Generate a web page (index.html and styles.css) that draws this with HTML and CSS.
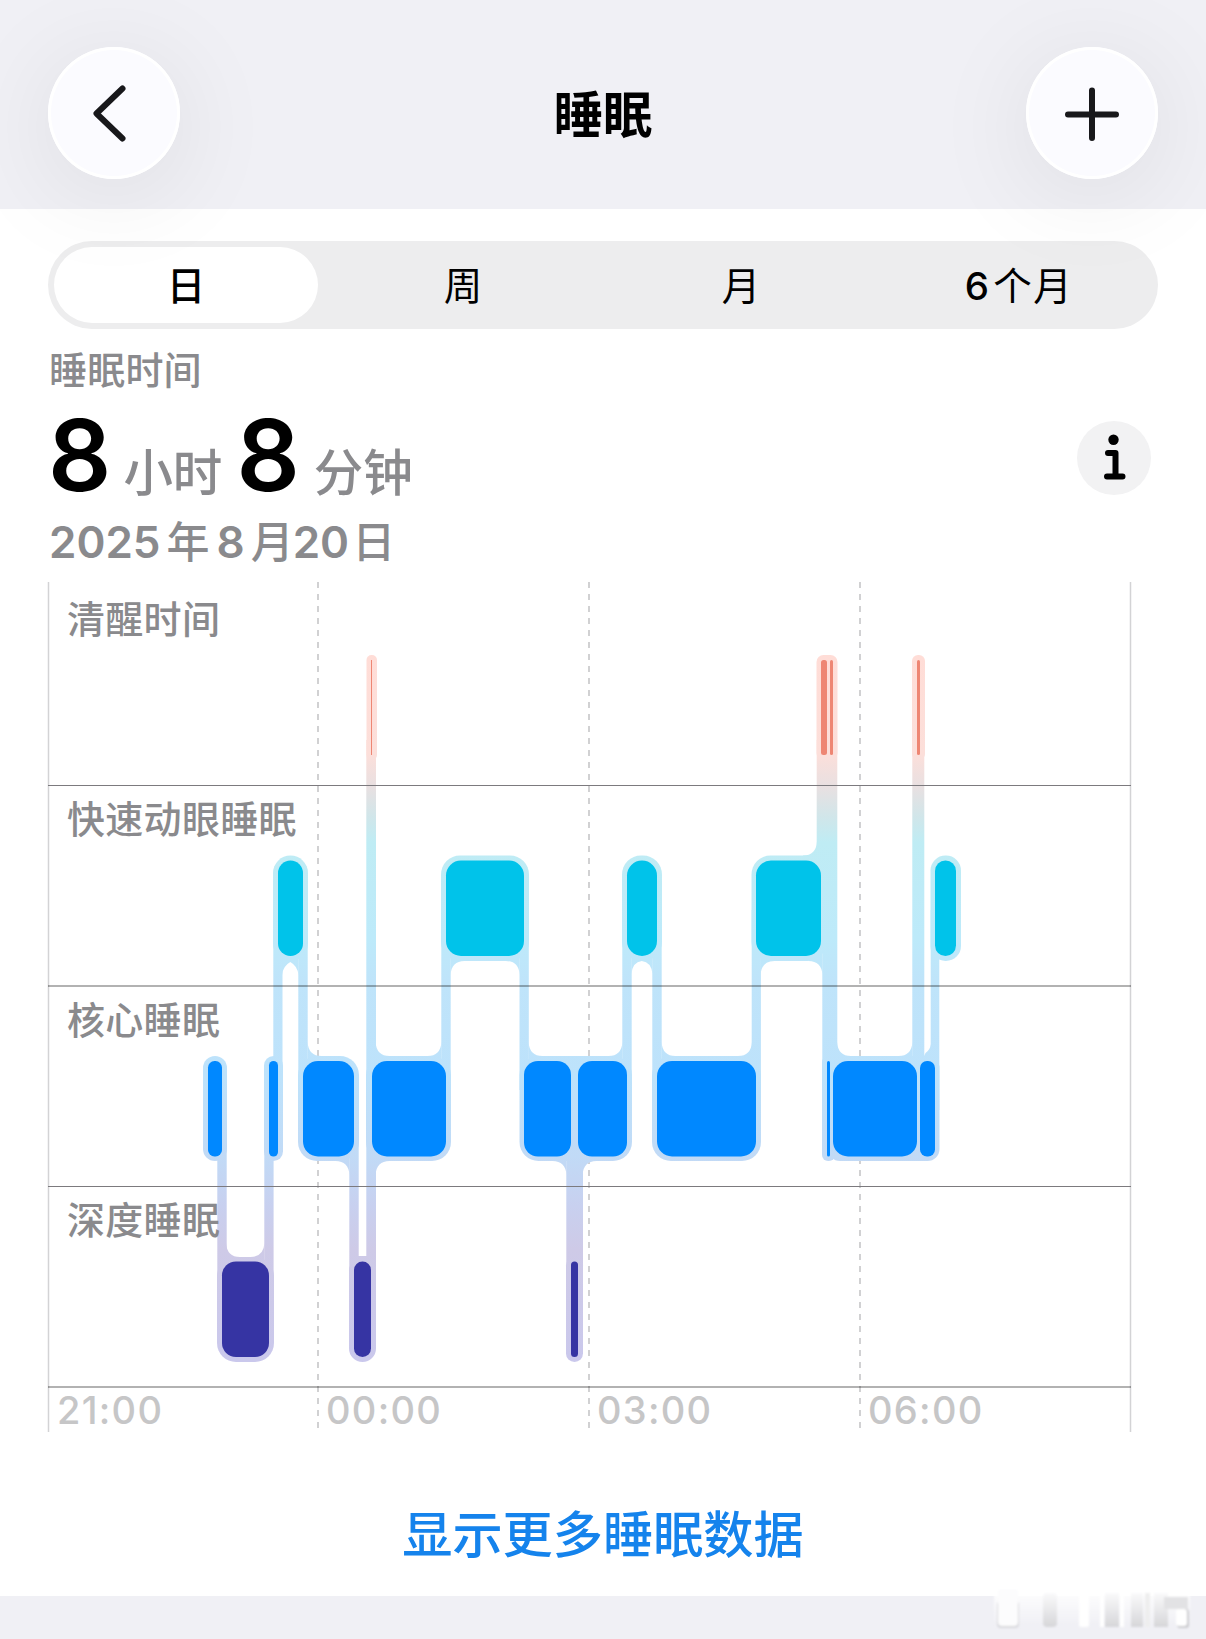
FILE: index.html
```html
<!DOCTYPE html>
<html lang="zh-CN">
<head>
<meta charset="utf-8">
<title>睡眠</title>
<link rel="stylesheet" href="styles.css">
</head>
<body>
<header class="nav">
  <button class="round-btn" aria-label="返回">
    <svg width="132" height="132" viewBox="0 0 132 132"><path d="M74.500 41.500 L48.500 66.500 L74.500 91.500" class="glyph"/></svg>
  </button>
  <h1 class="title">睡眠</h1>
  <button class="round-btn" aria-label="添加">
    <svg width="132" height="132" viewBox="0 0 132 132"><path d="M66 43.500 V91 M42 67.500 H90" class="glyph"/></svg>
  </button>
</header>
<main class="content">
  <nav class="segments">
    <span class="segment segment-active">日</span>
    <span class="segment">周</span>
    <span class="segment">月</span>
    <span class="segment"><span class="digit">6</span><span class="after-digit">个月</span></span>
  </nav>
  <section class="summary">
    <div class="summary-text">
      <p class="caption">睡眠时间</p>
      <p class="duration"><b>8</b><span class="unit unit-hours">小时</span><b>8</b><span class="unit unit-minutes">分钟</span></p>
      <p class="date">2025<span class="year">年</span>8<span class="month">月</span>20<span class="day">日</span></p>
    </div>
    <button class="info" aria-label="信息">
      <svg width="74" height="74" viewBox="0 0 74 74"><circle cx="36.500" cy="18.800" r="5.200"/><path d="M31 32 H38.500 V55 M30 55.500 H45.500" /></svg>
    </button>
  </section>
  <svg class="chart" width="1206" height="852" viewBox="0 582 1206 852">
    <defs>
      <linearGradient id="stage" gradientUnits="userSpaceOnUse" x1="0" y1="655" x2="0" y2="1362">
        <stop offset="0" stop-color="#ffddd7"/>
        <stop offset=".14" stop-color="#fcdfda"/>
        <stop offset=".185" stop-color="#e9e0e1"/>
        <stop offset=".23" stop-color="#d0e6ea"/>
        <stop offset=".265" stop-color="#bfecf4"/>
        <stop offset=".4" stop-color="#bdeafa"/>
        <stop offset=".46" stop-color="#bfe4fa"/>
        <stop offset=".6" stop-color="#bde2fb"/>
        <stop offset=".71" stop-color="#c1daf6"/>
        <stop offset=".78" stop-color="#c8d0ef"/>
        <stop offset=".84" stop-color="#cecae7"/>
        <stop offset="1" stop-color="#cac8ec"/>
      </linearGradient>
    </defs>
    <g class="grid-solid"><path d="M48.500 582V1432M1130.500 582V1432"/></g>
    <g class="grid-dash"><path d="M318 582V1432M589 582V1432M860 582V1432"/></g>
    <g fill="url(#stage)">
      <!-- outlines around each block -->
      <rect x="203" y="1056" width="24" height="105" rx="12"/>
      <rect x="264" y="1056" width="19" height="105" rx="9.500"/>
      <rect x="298" y="1056" width="61" height="105" rx="19"/>
      <rect x="366" y="1056" width="85" height="105" rx="19"/>
      <rect x="519.500" y="1056" width="112.500" height="105" rx="19"/>
      <rect x="652" y="1056" width="109" height="105" rx="19"/>
      <rect x="822" y="1056" width="13" height="105" rx="6"/>
      <rect x="828" y="1056" width="111.500" height="105" rx="12"/>
      <rect x="273" y="855.500" width="35" height="105.500" rx="17.500"/>
      <rect x="441" y="855.500" width="88" height="105.500" rx="19"/>
      <rect x="622" y="855.500" width="40" height="105.500" rx="19"/>
      <rect x="751.500" y="855.500" width="75" height="105.500" rx="19"/>
      <rect x="930.500" y="855.500" width="30.500" height="105.500" rx="15"/>
      <rect x="217" y="1257" width="57" height="105" rx="19"/>
      <rect x="349" y="1257" width="27" height="105" rx="13.500"/>
      <rect x="566" y="1257" width="17" height="105" rx="8.500"/>
      <rect x="366.500" y="655" width="10.500" height="105" rx="5"/>
      <rect x="816.500" y="655" width="21" height="105" rx="7"/>
      <rect x="912" y="655" width="13" height="105" rx="6"/>
      <!-- transitions -->
      <path d="M217.300 1140h9.400v140h-9.400zM264.300 1140h9.300v140h-9.300zM273.300 910h9.200v190h-9.200zM298.300 910h9.400v180h-9.400zM349.300 1130h9.400v145h-9.400zM366.300 740h9.700v540h-9.700zM441.300 910h9.400v180h-9.400zM519.500 910h9.300v180h-9.300zM566.300 1130h16.700v150h-16.700zM622.300 910h9.400v180h-9.400zM652.300 910h9.400v180h-9.400zM751.700 910h9.200v180h-9.200zM816.700 740h20.600v210h-20.600zM822.300 900h15v240h-15zM912.300 740h12v350h-12zM930.700 910h8.600v200h-8.600z"/>
      <!-- fillets above blocks -->
      <path d="M226 1243q1 14 14 14v12h-14zM264.500 1243q-1 14-14 14v12h14zM307.500 1042q1 14 14 14v12h-14zM375.500 1042q1 14 14 14v12h-14zM441.500 1042q-1 14-14 14v12h14zM528.500 1042q1 14 14 14v12h-14zM622.500 1042q-1 14-14 14v12h14zM661.500 1042q1 14 14 14v12h-14zM752 1042q-1 14-14 14v12h14zM837 1042q1 14 14 14v12h-14zM912.500 1042q-1 14-14 14v12h14zM817 841.500q-1 14-14 14v12h14zM931 1044q-1 6-5.500 9l-2 4h7.500z"/>
      <!-- fillets below blocks -->
      <path d="M349.500 1175q-1-14-14-14v-12h14zM375.500 1175q1-14 14-14v-12h-14zM566.500 1175q-1-14-14-14v-12h14zM582.500 1175q1-14 14-14v-12h-14zM450.500 975q1-14 14-14v-12h-14zM519.700 975q-1-14-14-14v-12h14zM760.500 975q1-14 14-14v-12h-14zM822.500 975q-1-14-14-14v-14h14zM282 975q1-9 8.300-13q7.300 4 8.200 13v-25h-16.500zM631.500 974q1-12 10.300-13q9.500 1 10.700 13v-25h-21z"/>
      <path d="M358 1256h9v4h-9z"/>
      <path d="M917 1056h14v24h-14z"/>
    </g>
    <g class="rows"><path d="M48 785.500H1131M48 1186.500H1131" class="row-thin"/><path d="M48 986H1131M48 1387H1131" class="row-wide"/></g>
    <g class="awake">
      <rect x="371" y="660" width="1" height="95"/>
      <rect x="821" y="660" width="6" height="95" rx="2.500"/>
      <rect x="830" y="660" width="3" height="95" rx="1.500"/>
      <rect x="917" y="660" width="3" height="95" rx="1.500"/>
    </g>
    <g class="rem">
      <rect x="278" y="860.500" width="25" height="95.500" rx="12.500"/>
      <rect x="446" y="860.500" width="78" height="95.500" rx="15"/>
      <rect x="627" y="860.500" width="30" height="95.500" rx="15"/>
      <rect x="756" y="860.500" width="65" height="95.500" rx="15"/>
      <rect x="935" y="860.500" width="21" height="95.500" rx="10.500"/>
    </g>
    <g class="core">
      <rect x="208" y="1061" width="14" height="95.500" rx="6.500"/>
      <rect x="269" y="1061" width="9" height="95.500" rx="4.500"/>
      <rect x="303" y="1061" width="51" height="95.500" rx="15"/>
      <rect x="372" y="1061" width="74" height="95.500" rx="15"/>
      <rect x="524" y="1061" width="47" height="95.500" rx="14"/>
      <rect x="578" y="1061" width="49" height="95.500" rx="14"/>
      <rect x="657" y="1061" width="99" height="95.500" rx="15"/>
      <rect x="827" y="1061" width="3" height="95.500" rx="1.500"/>
      <rect x="833" y="1061" width="84" height="95.500" rx="15"/>
      <rect x="920" y="1061" width="15" height="95.500" rx="7"/>
    </g>
    <g class="deep">
      <rect x="222" y="1261.500" width="47" height="95.500" rx="14"/>
      <rect x="354" y="1261.500" width="17" height="95.500" rx="8.500"/>
      <rect x="571" y="1261.500" width="7" height="95.500" rx="3.500"/>
    </g>
    <g class="row-label">
      <text x="67" y="633">清醒时间</text>
      <text x="67" y="833">快速动眼睡眠</text>
      <text x="67" y="1034">核心睡眠</text>
      <text x="67" y="1234">深度睡眠</text>
    </g>
    <g class="hour-label">
      <text x="57" y="1424">21:00</text>
      <text x="326" y="1424">00:00</text>
      <text x="597" y="1424">03:00</text>
      <text x="868" y="1424">06:00</text>
    </g>
  </svg>
  <a class="more">显示更多睡眠数据</a>
</main>
<footer class="tail">
  <svg class="stamp" width="210" height="50" viewBox="0 0 210 50">
    <defs>
      <linearGradient id="fade" x1="0" y1="0" x2="0" y2="1"><stop offset="0" stop-color="#fff"/><stop offset="1" stop-color="#fff" stop-opacity="0"/></linearGradient>
      <linearGradient id="grey" x1="0" y1="0" x2="0" y2="1"><stop offset="0" stop-color="#fafafb"/><stop offset="1" stop-color="#d6d6d9"/></linearGradient>
      <filter id="soft"><feGaussianBlur stdDeviation="1"/></filter>
    </defs>
    <g filter="url(#soft)">
      <rect x="6" y="0" width="196" height="36" fill="url(#fade)"/>
      <rect x="9" y="12" width="22" height="27" rx="4" fill="#d8d8dc"/><rect x="10" y="0" width="20" height="37" rx="4" fill="#fcfcfd"/>
      <rect x="55" y="4" width="14" height="34" rx="4" fill="url(#grey)"/>
      <rect x="91" y="0" width="10" height="38" rx="2" fill="#fff"/>
      <rect x="112" y="4" width="4" height="34" fill="#fff"/><rect x="117" y="4" width="14" height="34" fill="url(#grey)"/><rect x="132" y="4" width="4" height="34" fill="#fff"/>
      <rect x="143" y="4" width="12" height="34" fill="url(#grey)"/><rect x="157" y="4" width="5" height="34" fill="#eee"/>
      <rect x="166" y="4" width="14" height="34" fill="url(#grey)"/><rect x="176" y="8" width="24" height="12" fill="#e2e2e4"/>
      <rect x="189" y="20" width="12" height="19" rx="3" fill="#cacace"/><rect x="188" y="20" width="11" height="17" rx="3" fill="#fff"/>
    </g>
  </svg>
</footer>
</body>
</html>
```
FILE: styles.css
```css
* { box-sizing: border-box; }
body {
  margin: 0;
  width: 1206px;
  height: 1639px;
  overflow: hidden;
  background: #f0f0f5;
  color: #000;
  font-family: "Inter", "Noto Sans CJK SC", sans-serif;
}
p, h1 { margin: 0; }
button { border: 0; padding: 0; font: inherit; }
.nav {
  position: relative;
  z-index: 1;
  height: 209px;
  padding: 47px 48px 0;
  display: flex;
  justify-content: space-between;
  align-items: flex-start;
}
.round-btn {
  width: 132px;
  height: 132px;
  border-radius: 50%;
  background: #fbfbff;
  box-shadow: inset 0 0 0 3px #fff, 0 14px 105px rgba(0, 0, 0, .085);
}
.round-btn svg { display: block; }
.glyph { fill: none; stroke: #18181b; stroke-width: 6; stroke-linecap: round; stroke-linejoin: round; }
.title { padding-top: 2px; font-size: 49.500px; line-height: 132px; font-weight: 600; }
.content {
  height: 1387px;
  padding-top: 32px;
  background: #fff;
  display: flex;
  flex-direction: column;
}
.segments {
  height: 88px;
  margin: 0 48px;
  padding: 6px;
  border-radius: 44px;
  background: #ededee;
  display: grid;
  grid-template-columns: 264px 1fr 1fr 1fr;
}
.segment {
  padding-left: 12px;
  border-radius: 38px;
  text-align: center;
  font-size: 38.500px;
  line-height: 78px;
  font-weight: 400;
}
.segment-active { height: 76px; padding-left: 0; background: #fff; font-weight: 500; }
.digit { font-weight: 500; }
.after-digit { margin-left: 4px; letter-spacing: 1.500px; }
.summary {
  height: 253px;
  padding: 0 55px 0 49px;
  display: flex;
  justify-content: space-between;
}
.summary-text { display: flex; flex-direction: column; color: #8a8a8d; font-weight: 500; }
.caption { height: 81px; font-size: 38px; line-height: 83px; letter-spacing: .2px; }
.duration { height: 90px; line-height: 90px; font-size: 49.500px; white-space: nowrap; }
.duration b { margin-left: -1px; font-size: 99px; font-weight: 600; color: #000; }
.unit-hours { margin: 0 15px 0 12px; }
.unit-minutes { margin-left: 14px; }
.date { height: 82px; font-size: 44px; line-height: 85px; font-weight: 600; white-space: nowrap; }
.date span { font-size: 43px; font-weight: 500; }
.date .year { margin: 0 7px 0 6px; }
.date .month { margin: 0 -1px 0 6px; }
.date .day { margin-left: 3px; }
.info { width: 74px; height: 74px; margin-top: 92px; border-radius: 50%; background: #f2f2f3; }
.info svg { display: block; fill: #000; }
.info path { fill: none; stroke: #000; stroke-width: 6; stroke-linecap: round; stroke-linejoin: round; }
.chart { display: block; flex: none; }
.grid-solid { stroke: #d3d3d5; stroke-width: 1.500; }
.grid-dash { stroke: #c6c6c8; stroke-width: 1.600; stroke-dasharray: 6 6; }
.row-thin { stroke: #7c7a7e; stroke-width: 1; }
.row-wide { stroke: #000; stroke-opacity: .3; stroke-width: 2; }
.awake { fill: #ee8673; }
.rem { fill: #00c3ea; }
.core { fill: #0088ff; }
.deep { fill: #3634a3; }
.row-label { fill: #8a8a8d; font-size: 38px; font-weight: 500; letter-spacing: .3px; }
.hour-label { fill: #c6c6c7; font-size: 38px; font-weight: 500; letter-spacing: 1.300px; }
.more {
  margin-top: 65px;
  height: 72px;
  text-align: center;
  font-size: 50.200px;
  line-height: 72px;
  font-weight: 500;
  color: #1583ec;
}
.tail { height: 43px; display: flex; justify-content: flex-end; }
.stamp { margin: -7px 8px 0 0; }
```
